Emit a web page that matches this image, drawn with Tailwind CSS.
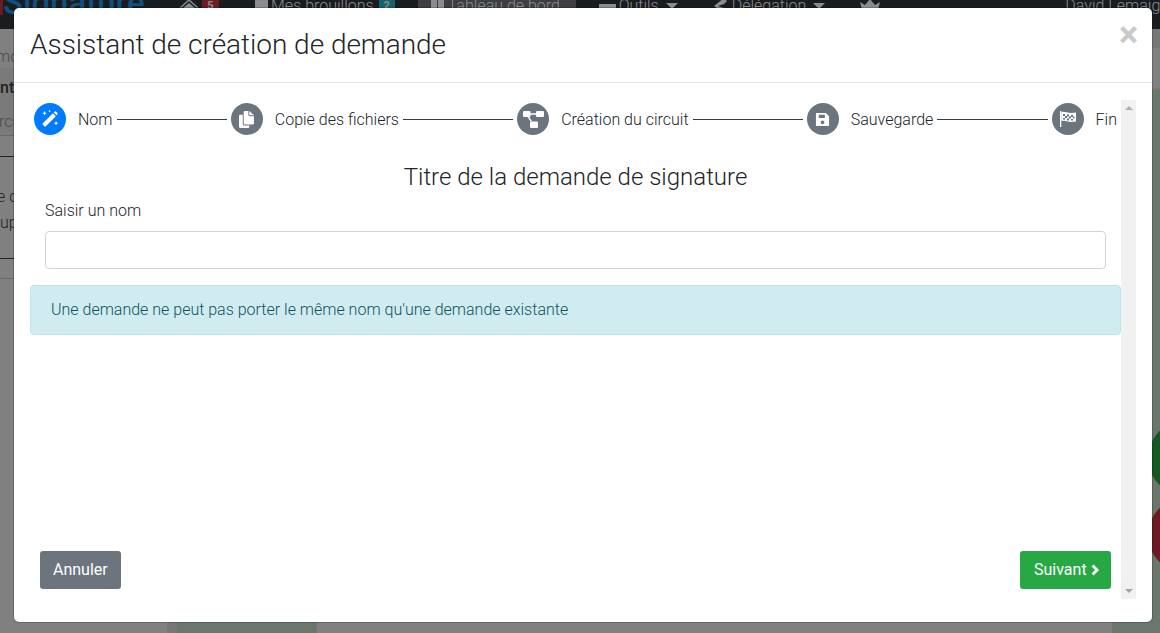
<!DOCTYPE html>
<html lang="fr">
<head>
<meta charset="utf-8">
<title>Assistant de création de demande</title>
<script src="https://cdn.jsdelivr.net/npm/@tailwindcss/browser@4"></script>
</head>
<body class="m-0 overflow-hidden bg-[#808080] font-['Roboto',sans-serif]">
<div class="relative h-[633px] w-[1160px] overflow-hidden">
  <!-- dimmed page behind the dialog -->
  <div class="h-[29px] w-full overflow-hidden bg-[#1a1d20]">
    <div class="-mt-[6px] flex h-6 items-center whitespace-nowrap text-[16px] font-light leading-6 text-[#8a8c8f]">
      <span class="-mt-[6px] h-6 w-[3px] shrink-0 bg-[#6e1a22]"></span>
      <span class="-mt-[6px] w-[177px] shrink-0 text-[33px] font-medium leading-6 text-[#0f5080]">Signature</span>
      <svg viewBox="0 0 18 16" class="h-[16px] w-[18px] shrink-0" fill="#8a8c8f"><path d="M9 1L0 9l1 1 8-7 8 7 1-1zM3 10v6h4v-4h4v4h4v-6L9 5z"/></svg>
      <span class="ml-[4px] flex w-[17px] shrink-0 justify-center bg-[#6e1c24] text-[11px] font-bold">5</span>
      <svg viewBox="0 0 13 16" class="ml-[36px] h-[16px] w-[13px] shrink-0" fill="#8a8c8f"><path d="M0 0h13v16H0z"/></svg>
      <span class="ml-[3px]">Mes brouillons</span>
      <span class="ml-[5px] flex w-[16px] shrink-0 justify-center bg-[#14626e] text-[11px] font-bold">2</span>
      <span class="ml-[23px] flex h-6 w-[158px] shrink-0 items-center bg-[#3d3f42] pl-[13px]">
        <svg viewBox="0 0 13 16" class="h-[16px] w-[13px] shrink-0" fill="#8a8c8f"><path d="M0 0h6v16H0zM7 0h6v16H7z"/></svg>
        <span class="ml-[4px]">Tableau de bord</span>
      </span>
      <svg viewBox="0 0 17 16" class="ml-[23px] h-[16px] w-[17px] shrink-0" fill="#8a8c8f"><path d="M0 6h17v10H0z"/></svg>
      <span class="ml-[3px]">Outils</span>
      <span class="ml-[7px] h-0 w-0 shrink-0 border-x-[6px] border-t-[6px] border-x-transparent border-t-[#8a8c8f]"></span>
      <svg viewBox="0 0 13 16" class="ml-[36px] h-[16px] w-[13px] shrink-0" fill="#8a8c8f"><path d="M10 0l3 3-3 3-6 2 6 2 3 3-3 3-7-6-3-2z"/></svg>
      <span class="ml-[5px]">Délégation</span>
      <span class="ml-[7px] h-0 w-0 shrink-0 border-x-[6px] border-t-[6px] border-x-transparent border-t-[#8a8c8f]"></span>
      <svg viewBox="0 0 20 16" class="ml-[35px] h-[16px] w-[20px] shrink-0" fill="#8a8c8f"><path d="M0 4l5 3 5-6 5 6 5-3-3 12H3z"/></svg>
      <span class="ml-[185px]">David Lemaigre</span>
    </div>
  </div>
  <div class="relative h-[604px] w-full bg-[#808080]">
    <div class="absolute left-0 top-[39px] h-[67px] w-[14px] bg-[#7a7a7a]"></div>
    <div class="absolute -left-[4px] top-[16px] text-[16px] font-light text-[#4a4a4a]">mo</div>
    <div class="absolute left-0 top-[47px] text-[16px] font-medium text-[#222]">nt</div>
    <div class="absolute -left-[1px] top-[81px] text-[16px] font-light text-[#4a4a4a]">rcu</div>
    <div class="absolute left-0 top-[106px] h-px w-[14px] bg-[#6a6a6a]"></div>
    <div class="absolute left-0 top-[127px] h-px w-[14px] bg-[#222]"></div>
    <div class="absolute -left-[3px] top-[156px] text-[16px] font-light text-[#222]">e c</div>
    <div class="absolute left-0 top-[182px] text-[16px] font-light text-[#222]">up</div>
    <div class="absolute left-0 top-[229px] h-px w-[14px] bg-[#222]"></div>
    <div class="absolute left-0 top-[249px] h-px w-[14px] bg-[#6a6a6a]"></div>
    <div class="absolute left-[167px] top-[593px] h-[11px] w-[10px] bg-[#777]"></div>
    <div class="absolute left-[177px] top-[593px] h-[11px] w-[140px] bg-[#6b776c]"></div>
    <div class="absolute left-[1146px] top-0 h-[19px] w-[14px] bg-[#777]"></div>
    <div class="absolute left-[1146px] top-[59px] h-[2px] w-[14px] bg-[#777]"></div>
    <div class="absolute left-[1112px] top-[61px] h-[543px] w-[48px] bg-[#6b776c]"></div>
    <div class="absolute left-[1148px] top-[392px] h-[74px] w-[74px] rounded-full bg-[#14591f]"></div>
    <div class="absolute left-[1148px] top-[469px] h-[74px] w-[74px] rounded-full bg-[#6e1a22]"></div>
  </div>

  <!-- dialog -->
  <div class="absolute left-[14px] top-[8px] flex h-[614px] w-[1138px] flex-col rounded-[5px] bg-white text-[#212529] shadow-[0_0_0_1px_rgba(0,0,0,0.2)]">
    <div class="flex h-[75px] items-start justify-between border-b border-[#dee2e6] px-4 pt-4">
      <h5 class="text-[28px] font-light leading-[42px] tracking-[-0.03px] text-[#212529]">Assistant de création de demande</h5>
      <span class="-mr-[2px] -mt-[9px] text-[36px] font-bold leading-[40px] text-[#c9c9c9]">×</span>
    </div>
    <div class="flex min-h-0 flex-1">
      <div class="flex min-w-0 flex-1 flex-col pl-4 pb-[33px]">
        <div class="flex items-center pl-[4px] pt-[20px] text-[16px] font-light leading-[30px] text-[#212529]">
          <span class="flex h-8 w-8 shrink-0 items-center justify-center rounded-full bg-[#007bff]">
            <svg viewBox="0 0 20 20" class="h-[22px] w-[22px]" fill="white"><path d="M12.600 4.700l2.700 2.700-9.100 9.100c-.4.400-1 .4-1.400 0l-1.300-1.300c-.4-.4-.4-1 0-1.400z"/><path d="M14.200 3.300c.4-.4 1-.4 1.400 0l1.100 1.100c.4.400.4 1 0 1.400l-.7.700-2.500-2.500z"/><path d="M5 2.800l.6 1.400 1.400.6-1.400.6L5 6.800l-.6-1.400L3 4.800l1.400-.6zM9.600 1.500l.4.900.9.400-.9.400-.4.900-.4-.9-.9-.4.9-.4zM15.500 11.800l.6 1.400 1.400.6-1.400.6-.6 1.400-.6-1.400-1.400-.6 1.400-.6z"/></svg>
          </span>
          <span class="ml-3 pt-[2px]">Nom</span>
          <span class="mx-1 h-px flex-1 bg-[#343a40]"></span>
          <span class="flex h-8 w-8 shrink-0 items-center justify-center rounded-full bg-[#6c757d]">
            <svg viewBox="0 0 16 18" class="h-[17px] w-[15px]" fill="white"><path d="M10 0H6.200C5.500 0 5 .5 5 1.200V13c0 .7.5 1.200 1.200 1.200h8.600c.7 0 1.200-.5 1.200-1.200V5.500h-4.800C10.500 5.500 10 5 10 4.300z"/><path d="M11 0v4.500h5z"/><path d="M4 4H1.200C.5 4 0 4.500 0 5.200V16.800C0 17.500.5 18 1.200 18h8.600c.7 0 1.200-.5 1.200-1.200V15.500H6.200C4.900 15.500 4 14.500 4 13.200z"/></svg>
          </span>
          <span class="ml-3 pt-[2px]">Copie des fichiers</span>
          <span class="mx-1 h-px flex-1 bg-[#343a40]"></span>
          <span class="flex h-8 w-8 shrink-0 items-center justify-center rounded-full bg-[#6c757d]">
            <svg viewBox="0 0 21 17" class="h-[17px] w-[21px]" fill="white"><rect x="0" y="0" width="7.500" height="6" rx="1"/><rect x="13" y="0" width="8" height="6" rx="1"/><rect x="7" y="10.500" width="8" height="6.500" rx="1"/><path d="M7 2.300h6v1.400H7zM4.500 6h1.700l3 4.500H7.500z"/></svg>
          </span>
          <span class="ml-3 pt-[2px]">Création du circuit</span>
          <span class="mx-1 h-px flex-1 bg-[#343a40]"></span>
          <span class="flex h-8 w-8 shrink-0 items-center justify-center rounded-full bg-[#6c757d]">
            <svg viewBox="0 0 16 16" class="h-[15px] w-[15px]" fill="white"><path fill-rule="evenodd" d="M2 1h9.500L15 4.500V14c0 .6-.4 1-1 1H2c-.6 0-1-.4-1-1V2c0-.6.4-1 1-1zm2 2v3.500h6.500V3zm4 6a2 2 0 1 0 0 4 2 2 0 0 0 0-4z"/></svg>
          </span>
          <span class="ml-3 pt-[2px]">Sauvegarde</span>
          <span class="mx-1 h-px flex-1 bg-[#343a40]"></span>
          <span class="flex h-8 w-8 shrink-0 items-center justify-center rounded-full bg-[#6c757d]">
            <svg viewBox="0 0 16 16" class="h-[16px] w-[16px]" fill="white"><path d="M0 0h1.300v16H0z"/><path d="M1.300 1C5 0 8 3 16 1.500V10.500C8 12 5 9 1.300 10z"/><path fill="#6c757d" d="M3 3h2v2H3zM7 3.500h2v2H7zM11 4h2v2h-2zM5 5h2v2H5zM9 5.500h2v2H9zM13 5.500h1.500v2H13zM3 7h2v1.500H3zM7 7.500h2v2H7zM11 8h2v1.500h-2z"/></svg>
          </span>
          <span class="ml-3 pr-1 pt-[2px]">Fin</span>
        </div>
        <h4 class="mt-[24px] text-center text-[24px] font-light leading-[36px] text-[#212529]">Titre de la demande de signature</h4>
        <label class="mt-[4px] pl-[15px] text-[16px] font-light leading-[24px] text-[#212529]">Saisir un nom</label>
        <div class="mt-[8px] px-[15px]">
          <input type="text" class="block h-[38px] w-full rounded-[4px] border border-[#ced4da] bg-white">
        </div>
        <div class="mt-[16px] flex h-[50px] items-center rounded-[4px] border border-[#bee5eb] bg-[#d1ecf1] px-5 text-[16px] font-light text-[#0c5460]">Une demande ne peut pas porter le même nom qu'une demande existante</div>
        <div class="mt-auto flex items-center justify-between px-[10px]">
          <button class="h-[38px] rounded-[3px] bg-[#6c757d] px-[13px] text-[16px] font-normal text-white">Annuler</button>
          <button class="flex h-[38px] w-[91px] items-center gap-[4px] rounded-[3px] bg-[#28a745] pl-[14px] text-[16px] font-normal text-white">Suivant
            <svg viewBox="0 0 10 14" class="h-[12px] w-[8px]" fill="none" stroke="white" stroke-width="3.500"><path d="M2 1.500L7.500 7L2 12.500"/></svg>
          </button>
        </div>
      </div>
      <div class="mb-[23px] mr-[16px] mt-[17px] flex w-[15px] shrink-0 flex-col items-center justify-between bg-[#f1f1f1] py-[6px]">
        <span class="h-0 w-0 border-x-[4px] border-b-[4px] border-x-transparent border-b-[#b0b0b0]"></span>
        <span class="h-0 w-0 border-x-[4px] border-t-[4px] border-x-transparent border-t-[#a3a3a3]"></span>
      </div>
    </div>
  </div>
</div>
</body>
</html>
